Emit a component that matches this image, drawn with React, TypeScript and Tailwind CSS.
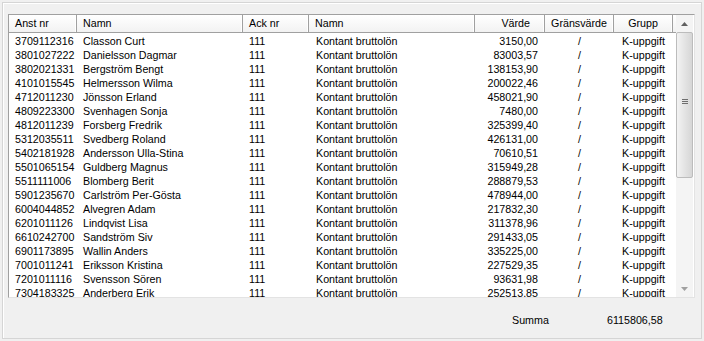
import React from "react";

type Row = { anst: string; namn: string; varde: string };

const rows: Row[] = [
  { anst: "3709112316", namn: "Classon Curt", varde: "3150,00" },
  { anst: "3801027222", namn: "Danielsson Dagmar", varde: "83003,57" },
  { anst: "3802021331", namn: "Bergström Bengt", varde: "138153,90" },
  { anst: "4101015545", namn: "Helmersson Wilma", varde: "200022,46" },
  { anst: "4712011230", namn: "Jönsson Erland", varde: "458021,90" },
  { anst: "4809223300", namn: "Svenhagen Sonja", varde: "7480,00" },
  { anst: "4812011239", namn: "Forsberg Fredrik", varde: "325399,40" },
  { anst: "5312035511", namn: "Svedberg Roland", varde: "426131,00" },
  { anst: "5402181928", namn: "Andersson Ulla-Stina", varde: "70610,51" },
  { anst: "5501065154", namn: "Guldberg Magnus", varde: "315949,28" },
  { anst: "5511111006", namn: "Blomberg Berit", varde: "288879,53" },
  { anst: "5901235670", namn: "Carlström Per-Gösta", varde: "478944,00" },
  { anst: "6004044852", namn: "Alvegren Adam", varde: "217832,30" },
  { anst: "6201011126", namn: "Lindqvist Lisa", varde: "311378,96" },
  { anst: "6610242700", namn: "Sandström Siv", varde: "291433,05" },
  { anst: "6901173895", namn: "Wallin Anders", varde: "335225,00" },
  { anst: "7001011241", namn: "Eriksson Kristina", varde: "227529,35" },
  { anst: "7201011116", namn: "Svensson Sören", varde: "93631,98" },
  { anst: "7304183325", namn: "Anderberg Erik", varde: "252513,85" },
];

function Head({ w, align, children }: { w: string; align?: "left" | "right" | "center"; children: React.ReactNode }) {
  const a = align === "right" ? "justify-end pr-[14px]" : align === "center" ? "justify-center" : "justify-start pl-[6px]";
  return (
    <div className={`${w} h-full flex items-center ${a} border-r border-r-[#a0a0a0] shadow-[inset_-1px_0_0_#ffffff] shrink-0`}>
      {children}
    </div>
  );
}

export default function App() {
  return (
    <div className="w-[704px] h-[341px] bg-[#f0f0f0] p-[2px] text-black text-[10.7px] leading-none" style={{ fontFamily: "'Liberation Sans', Arial, sans-serif" }}>
      <div className="w-full h-full border border-[#d5d5d5] shadow-[inset_1px_1px_0_#ffffff] pt-[11px] pl-[5px] pr-[5px] flex flex-col">
        {/* list */}
        <div className="w-[687px] h-[284px] shrink-0 border border-t-[#a0a0a0] border-l-[#a0a0a0] border-b-[#e3e3e3] border-r-[#e3e3e3] bg-white flex overflow-hidden">
          <div className="flex-1 flex flex-col overflow-hidden">
            <div className="h-[18px] flex border-b border-b-[#a0a0a0] bg-[linear-gradient(#ffffff,#f2f2f2)] shrink-0">
              <Head w="w-[68px]">Anst nr</Head>
              <Head w="w-[166px]">Namn</Head>
              <Head w="w-[66px]">Ack nr</Head>
              <Head w="w-[166px]">Namn</Head>
              <Head w="w-[70px]" align="right">Värde</Head>
              <Head w="w-[69px]" align="center">Gränsvärde</Head>
              <Head w="w-[59px]" align="center">Grupp</Head>
              <div className="flex-1" />
            </div>
            <div className="flex flex-col pt-[1px]">
              {rows.map((r) => (
                <div key={r.anst} className="h-[14px] flex items-center shrink-0">
                  <div className="w-[68px] pl-[6px] shrink-0">{r.anst}</div>
                  <div className="w-[166px] pl-[6px] shrink-0 whitespace-nowrap">{r.namn}</div>
                  <div className="w-[66px] pl-[6px] shrink-0">111</div>
                  <div className="w-[166px] pl-[7px] shrink-0 whitespace-nowrap">Kontant bruttolön</div>
                  <div className="w-[70px] pr-[7px] text-right shrink-0">{r.varde}</div>
                  <div className="w-[69px] text-center shrink-0">/</div>
                  <div className="w-[59px] text-center shrink-0">K-uppgift</div>
                </div>
              ))}
            </div>
          </div>
          {/* scrollbar */}
          <div className="w-[17px] h-full bg-[#f4f4f4] flex flex-col shrink-0 mr-[1px]">
            <div className="h-[17px] flex items-center justify-center shrink-0">
              <svg width="7" height="4" viewBox="0 0 7 4"><path d="M3.5 0 L7 4 L0 4 Z" fill="#606060" /></svg>
            </div>
            <div className="h-[146px] border border-[#bcbcbc] rounded-[2px] bg-[linear-gradient(90deg,#f3f3f3,#e4e4e4_50%,#d6d6d6)] flex items-center justify-center shrink-0">
              <div className="flex flex-col gap-[1px] mt-[-8px]">
                <div className="w-[6px] h-[1px] bg-[#6e6e6e]" />
                <div className="w-[6px] h-[1px] bg-[#6e6e6e]" />
                <div className="w-[6px] h-[1px] bg-[#6e6e6e]" />
              </div>
            </div>
            <div className="flex-1" />
            <div className="h-[17px] flex items-center justify-center shrink-0">
              <svg width="7" height="4" viewBox="0 0 7 4"><path d="M0 0 L7 0 L3.5 4 Z" fill="#a0a0a0" /></svg>
            </div>
          </div>
        </div>
        {/* summa */}
        <div className="flex items-center h-[40px] pt-[5px] shrink-0">
          <div className="w-[504px] shrink-0" />
          <div className="w-[95px] shrink-0">Summa</div>
          <div className="shrink-0">6115806,58</div>
        </div>
      </div>
    </div>
  );
}
